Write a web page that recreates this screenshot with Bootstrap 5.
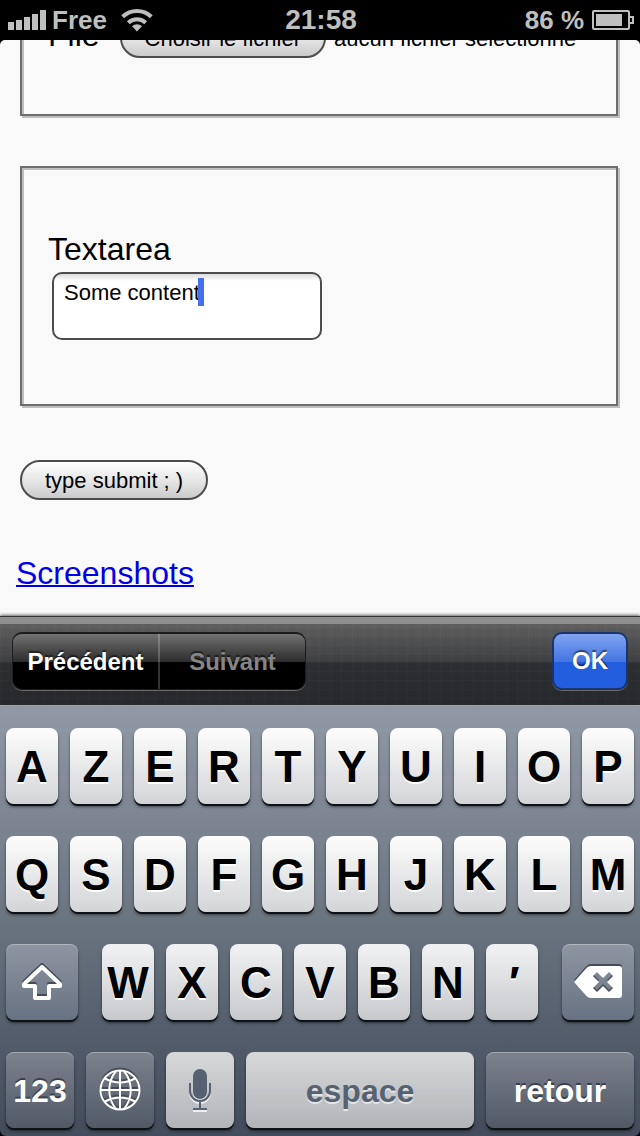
<!DOCTYPE html>
<html lang="fr">
<head>
<meta charset="utf-8">
<meta name="viewport" content="width=device-width, initial-scale=1">
<title>Formulaire</title>
<link href="https://cdn.jsdelivr.net/npm/bootstrap@5.3.0/dist/css/bootstrap.min.css" rel="stylesheet">
<style>
  body { font-family: "Liberation Sans", Arial, sans-serif; background: #000; color: #000; }
  .status-bar { height: 40px; padding: 0 6px 0 8px; color: #bfbfbf; font-size: 26px; line-height: 40px; }
  .status-time { font-size: 28px; }
  .side { flex: 1 1 0; }
  .carrier { gap: 14px; }
  .signal { margin-right: -8px; }

  .web-page { background: #f9f9f9; border-radius: 5px 5px 0 0; font-size: 32px; line-height: 34px; min-height: 0; padding: 0 16px 26px; }
  .etched { border: 2px solid #6d6d6d; box-shadow: 2px 2px 0 #bebebe, inset 2px 2px 0 #bebebe; margin: 0 6px 50px 4px; padding: 64px 26px; }
  .etched.file-group { padding-bottom: 56px; }
  .small-text { font-size: 22px; }
  .pill { height: 40px; padding: 0 23px; border: 2px solid #4c4c4c; border-radius: 20px; font-size: 22px; line-height: 38px; color: #000; background: linear-gradient(#fff, #e6e6e6 50%, #cbcbcb); }
  .file-pill { margin: 0 8px 0 20px; }
  .text-zone { width: 270px; height: 68px; margin: 6px 4px 0; }
  .text-zone textarea { padding: 6px 10px; border: 2px solid #4c4c4c; border-radius: 10px; font-size: 22px; line-height: 26px; background: linear-gradient(#ddd, #fff 7px); resize: none; color: #000; outline: 0; overflow: hidden; }
  .caret { left: 146px; top: 6px; width: 6px; height: 28px; background: #4470ef; }
  .shots { color: #0000e8; text-decoration-thickness: 2px; margin-top: 56px; }

  .tool-bar { height: 89px; padding: 8px 12px 0; border-top: 1px solid #333; position: relative; box-shadow: 0 -1px 3px rgba(0,0,0,.6);
    background:
      linear-gradient(#8f8f8f, #8f8f8f) top / 100% 7px no-repeat,
      repeating-linear-gradient(90deg, rgba(255,255,255,.02) 0 1px, transparent 1px 5px, rgba(0,0,0,.03) 5px 6px, transparent 6px 11px),
      repeating-linear-gradient(rgba(255,255,255,.02) 0 1px, transparent 1px 4px, rgba(0,0,0,.03) 4px 5px, transparent 5px 9px),
      linear-gradient(#666, #5e5e5f 8px, #3e3f41 45px, #2d2f33 45px, #27282b); }
  .tool-bar button { font-size: 24px; font-weight: 700; line-height: 54px; text-shadow: 0 -2px 1px rgba(0,0,0,.5); }
  .segments { height: 58px; width: 294px; margin-top: 7px; border-radius: 10px; overflow: hidden; border: 1px solid #1c1c1c; border-top-width: 2px; background: linear-gradient(#727272, #2c2c2c 28px, #000 28px); box-shadow: 0 1px 0 #6a6a6c; }
  .segments button { flex: 1 1 0; border: 0; background: none; color: #fff; padding: 0; line-height: 53px; }
  .segments button + button { border-left: 2px solid rgba(255,255,255,.2); color: #858585; }
  .ok-key { width: 76px; height: 58px; margin-top: 7px; border: 2px solid #1a3470; border-radius: 10px; color: #fff; padding: 0; background: linear-gradient(#82a4f1, #4274e2 28px, #225edd 28px); box-shadow: 0 1px 0 #6a6a6c; }

  .keyboard { padding: 22px 6px 8px; border-top: 1px solid #b3bac4; background: linear-gradient(#9199a6, #7f8693 25%, #66707d 55%, #505a68 80%, #434c5c); border-radius: 0 0 6px 6px; }
  .key-rows { gap: 32px; }
  .key-row { gap: 12px; }
  .key { flex: 52 1 0; min-width: 0; height: 76px; padding: 0; border: 0; border-radius: 8px; font-size: 44px; font-weight: 700; line-height: 78px; color: #000; text-shadow: 0 2px 0 #fff; background: linear-gradient(#fdfdfd, #d3d4d7); box-shadow: 0 2px 0 #0e1116, 0 3px 3px rgba(0,0,0,.5); }
  .key-row.third .key { background: linear-gradient(#f1f2f3, #c8c9cc); }
  .key-row.third .key.fn { flex-grow: 72; background: linear-gradient(#8f95a2, #677282); }
  .key.fn { color: #fff; font-size: 32px; text-shadow: 0 -2px 0 #3a404b; background: linear-gradient(#7c828e, #525967); box-shadow: inset 0 1px 0 rgba(255,255,255,.3), 0 2px 0 #0e1116, 0 3px 3px rgba(0,0,0,.5); }
  .key.pale { font-size: 32px; color: #566271; background: linear-gradient(#d6d8d9, #b3b4b8); text-shadow: 0 2px 0 #e4e5e7; }
  .w68 { flex-grow: 68; }
  .w148 { flex-grow: 148; }
  .w228 { flex-grow: 228; }
  .inset-dark { filter: drop-shadow(0 -2px 0 #454c58); }
  .inset-light { filter: drop-shadow(0 2px 0 #eee); }
</style>
</head>
<body class="d-flex flex-column vh-100 overflow-hidden">

<header class="status-bar d-flex flex-shrink-0 fw-bold">
  <div class="side carrier d-flex align-items-center">
    <svg class="signal" width="38" height="20" fill="currentColor" aria-hidden="true"><path d="M0 12h6v8H0zM8 10h6v10H8zM16 7h6v13h-6zM24 4h6v16h-6zM32 0h6v20h-6z"/></svg>
    <span>Free</span>
    <svg width="32" height="24" viewBox="0 0 32 24" fill="none" stroke="currentColor" stroke-width="4" aria-hidden="true"><path d="M1.700 8.700a20.500 20.500 0 0 1 28.600 0M7.300 14.700a12.500 12.500 0 0 1 17.400 0"/><path d="M16 23.500l-5-5.200a7 7 0 0 1 10 0z" fill="currentColor" stroke="none"/></svg>
  </div>
  <div class="status-time">21:58</div>
  <div class="side d-flex align-items-center justify-content-end">
    <span class="me-2">86 %</span>
    <svg width="42" height="20" fill="none" stroke="currentColor" stroke-width="2" aria-hidden="true"><rect x="1" y="1" width="36" height="18" rx="1"/><path d="M38 7h3v6h-3"/><path d="M4 4h26v12H4z" fill="currentColor" stroke="none"/></svg>
  </div>
</header>

<main class="web-page flex-grow-1 d-flex flex-column justify-content-end overflow-hidden">
  <div class="etched file-group flex-shrink-0 d-flex align-items-baseline">
    <label for="file">File</label>
    <input type="file" id="file" class="d-none">
    <button type="button" class="pill file-pill" onclick="document.getElementById('file').click()">Choisir le fichier</button>
    <span class="small-text">aucun fichier sélectionné</span>
  </div>
  <div class="etched flex-shrink-0">
    <label for="area" class="d-block">Textarea</label>
    <div class="text-zone position-relative">
      <textarea id="area" class="d-block w-100 h-100">Some content</textarea>
      <span class="caret position-absolute"></span>
    </div>
  </div>
  <button type="submit" class="pill flex-shrink-0 align-self-start ms-1 mt-1">type submit ; )</button>
  <a href="#" class="shots flex-shrink-0 align-self-start">Screenshots</a>
</main>

<div class="tool-bar flex-shrink-0 d-flex justify-content-between">
  <div class="segments d-flex">
    <button type="button">Précédent</button>
    <button type="button">Suivant</button>
  </div>
  <button type="button" class="ok-key">OK</button>
</div>

<div class="keyboard flex-shrink-0">
  <div class="key-rows d-flex flex-column">
    <div class="key-row d-flex">
      <button class="key">A</button><button class="key">Z</button><button class="key">E</button><button class="key">R</button><button class="key">T</button><button class="key">Y</button><button class="key">U</button><button class="key">I</button><button class="key">O</button><button class="key">P</button>
    </div>
    <div class="key-row d-flex">
      <button class="key">Q</button><button class="key">S</button><button class="key">D</button><button class="key">F</button><button class="key">G</button><button class="key">H</button><button class="key">J</button><button class="key">K</button><button class="key">L</button><button class="key">M</button>
    </div>
    <div class="key-row third d-flex">
      <button class="key fn d-flex align-items-center justify-content-center me-2" aria-label="Majuscule">
        <svg class="inset-dark" width="40" height="38" viewBox="0 0 40 38" fill="none" stroke="#fff" stroke-width="4" stroke-linejoin="round" aria-hidden="true"><path d="M20 4L38 21v2H27v12H13V23H2v-2z"/></svg>
      </button>
      <button class="key ms-1">W</button><button class="key">X</button><button class="key">C</button><button class="key">V</button><button class="key">B</button><button class="key">N</button><button class="key me-1 fst-italic">′</button>
      <button class="key fn d-flex align-items-center justify-content-center ms-2" aria-label="Effacer">
        <svg class="inset-dark" width="48" height="32" viewBox="0 0 48 32" aria-hidden="true"><path fill="#fff" fill-rule="evenodd" d="M0 16L12.500 2Q14 0 17 0H45Q48 0 48 3V29Q48 32 45 32H17Q14 32 12.500 30ZM19 10L25 16L19 22L23 26L29 20L35 26L39 22L33 16L39 10L35 6L29 12L23 6Z"/></svg>
      </button>
    </div>
    <div class="key-row d-flex">
      <button class="key fn w68">123</button>
      <button class="key fn w68 d-flex align-items-center justify-content-center" aria-label="Clavier suivant">
        <svg class="inset-dark" width="42" height="42" viewBox="0 0 42 42" fill="none" stroke="#fff" stroke-width="2" aria-hidden="true"><circle cx="21" cy="21" r="19.500"/><path d="M21 1.500v39M1.500 21h39M17 2C8 13 8 29 17 40M25 2c9 11 9 27 0 38M6 9.500q15 8 30 0M6 32.500q15-8 30 0"/></svg>
      </button>
      <button class="key pale w68 d-flex align-items-center justify-content-center" aria-label="Dictée">
        <svg class="inset-light" width="22" height="42" viewBox="0 0 22 42" fill="none" stroke="#566271" stroke-width="2" aria-hidden="true"><rect x="4" y="0" width="14" height="30" rx="7" fill="#566271" stroke="none"/><path d="M1 14v8a10 10 0 0 0 20 0v-8M11 32v8M4 40h14"/></svg>
      </button>
      <button class="key pale w228">espace</button>
      <button class="key fn w148">retour</button>
    </div>
  </div>
</div>

<script src="https://cdn.jsdelivr.net/npm/bootstrap@5.3.0/dist/js/bootstrap.bundle.min.js"></script>
</body>
</html>
